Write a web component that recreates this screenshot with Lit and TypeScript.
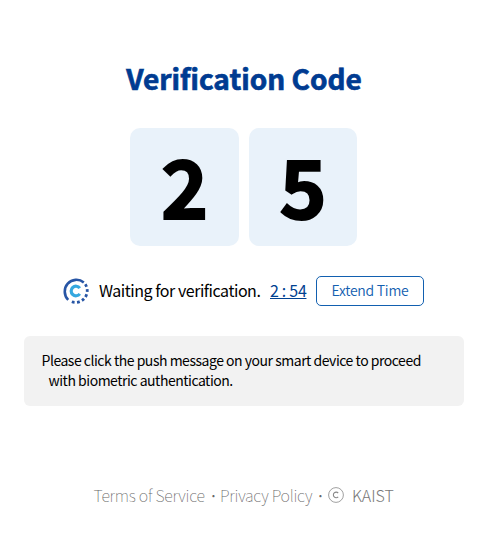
import { LitElement, html, css } from "lit";

class AppRoot extends LitElement {
  static styles = css`
    :host {
      display: block;
      box-sizing: border-box;
      width: 100%;
      height: 553px;
      padding: 56px 27px 0 24px;
      background: #fff;
      color: #000;
      font-family: "Noto Sans CJK KR", "Noto Sans", sans-serif;
      font-weight: 400;
      overflow: hidden;
    }
    h1 {
      margin: 0 0 28px;
      height: 44px;
      line-height: 44px;
      font-size: 28px;
      font-weight: 700;
      color: #003b91;
      -webkit-text-stroke: 0.7px #003b91;
      text-align: center;
    }
    .codes { display: flex; justify-content: center; gap: 10px; padding-right: 1px; }
    .digit {
      width: 109px;
      height: 118px;
      border-radius: 10px;
      background: #e9f2fa;
      font-size: 80px;
      font-weight: 700;
      -webkit-text-stroke: 2px #000;
      line-height: 113px;
      text-align: center;
    }
    .digit:last-child { width: 108px; }
    .status { display: flex; align-items: center; height: 30px; margin: 30px 0 0 38px; }
    .spinner { display: block; width: 28px; height: 28px; margin-right: 9px; }
    .wait, .time { line-height: 28px; height: 30px; font-size: 16px; letter-spacing: -0.46px; white-space: nowrap; }
    .wait { width: 171px; }
    .time { width: 46px; letter-spacing: -0.3px; color: #004191; text-decoration: underline; }
    button {
      box-sizing: border-box;
      width: 108px;
      height: 30px;
      padding: 0 0 2px;
      border: 1px solid #1260b0;
      border-radius: 5px;
      background: #fff;
      color: #1260b0;
      font: inherit;
      font-size: 14px;
      font-weight: 350;
      line-height: 26px;
      letter-spacing: -0.25px;
    }
    .note {
      box-sizing: border-box;
      height: 70px;
      margin-top: 30px;
      padding: 14px 18px 14px 17.5px;
      border-radius: 6px;
      background: #f2f2f2;
      font-size: 14px;
      line-height: 20px;
      letter-spacing: -0.48px;
      white-space: nowrap;
    }
    .second { padding-left: 7px; }
    footer {
      display: flex;
      align-items: center;
      height: 24px;
      margin: 77px 0 0 69.5px;
      font-size: 16px;
      font-weight: 100;
      letter-spacing: -0.25px;
      color: #666;
      white-space: nowrap;
    }
    .terms { width: 115.5px; }
    .dot { width: 11px; font-weight: 400; color: #666; }
    .privacy { width: 96px; letter-spacing: -0.25px; }
    .mark { width: 16px; height: 16px; margin: 0 8px 0 1px; }
    .owner { font-weight: 300; letter-spacing: 0; color: #777; }
  `;

  render() {
    return html`
      <h1>Verification Code</h1>
      <div class="codes">${["2", "5"].map((n) => html`<div class="digit">${n}</div>`)}</div>
      <div class="status">
        <svg class="spinner" viewBox="0 0 28 28" fill="none">
          <path d="M6.2 22.8A11.7 11.7 0 0 1 21.8 5.4" stroke="#2755a5" stroke-width="2.6"/>
          <path d="M21.8 5.4A11.7 11.7 0 0 1 6.2 22.8" stroke="#2755a5" stroke-width="2.8" stroke-dasharray="0 2.4 2.8 2.4 2.8 2.4 2.8 2.4 2.8 2.4 2.8 2.4 2.8 2.4"/>
          <path d="M17.8 11.1A4.8 4.8 0 1 0 17.8 16.9" stroke="#35a8df" stroke-width="3.2"/>
        </svg>
        <span class="wait">Waiting for verification.</span>
        <span class="time">2 : 54</span>
        <button>Extend Time</button>
      </div>
      <div class="note">
        <div>Please click the push message on your smart device to proceed</div>
        <div class="second">with biometric authentication.</div>
      </div>
      <footer>
        <span class="terms">Terms of Service</span>
        <span class="dot">·</span>
        <span class="privacy">Privacy Policy</span>
        <span class="dot">·</span>
        <svg class="mark" viewBox="0 0 16 16" fill="none" stroke="#888">
          <circle cx="8" cy="8" r="7.4" stroke-width=".8"/>
          <path d="M10.2 6A2.8 2.8 0 1 0 10.2 9.9" stroke-width="1.1"/>
        </svg>
        <span class="owner">KAIST</span>
      </footer>`;
  }
}
customElements.define("app-root", AppRoot);
